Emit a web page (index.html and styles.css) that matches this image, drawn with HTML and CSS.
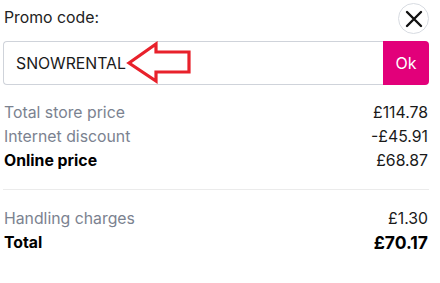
FILE: index.html
```html
<!DOCTYPE html>
<html>
<head>
<meta charset="utf-8">
<link rel="stylesheet" href="styles.css">
</head>
<body>
<div class="panel">
  <div class="head">
    <span class="label">Promo code:</span>
    <button class="close" aria-label="Close">
      <svg width="18" height="18" viewBox="0 0 18 18"><path d="M2 2L16 16M16 2L2 16" stroke="#111" stroke-width="2.4" stroke-linecap="round"/></svg>
    </button>
  </div>
  <div class="promo">
    <div class="input">
      <span class="code">SNOWRENTAL</span>
      <svg class="arrow" width="66" height="44" viewBox="0 0 66 44"><path d="M3 22L30 3V11H63V31H30V40Z" fill="none" stroke="#e8212b" stroke-width="3.2" stroke-linejoin="miter"/></svg>
    </div>
    <button class="ok">Ok</button>
  </div>
  <div class="rows first">
    <div class="row"><span class="muted">Total store price</span><span>£114.78</span></div>
    <div class="row"><span class="muted">Internet discount</span><span>-£45.91</span></div>
    <div class="row strong"><span>Online price</span><span class="plain">£68.87</span></div>
  </div>
  <hr class="sep">
  <div class="rows">
    <div class="row"><span class="muted">Handling charges</span><span>£1.30</span></div>
    <div class="row strong total"><span>Total</span><span class="big">£70.17</span></div>
  </div>
</div>
</body>
</html>
```
FILE: styles.css
```css
html, body { margin: 0; padding: 0; background: #fff; }
body { font-family: Inter, "Noto Sans", sans-serif; color: #1a1a1a; font-size: 15.8px; }
.panel { width: 426px; padding: 0 11px 0 3px; }
.head { display: flex; justify-content: space-between; align-items: center; height: 35px; }
.label { padding-left: 1px; color: #222; }
.close { width: 31px; height: 31px; border-radius: 50%; border: 1px solid #d8dce2; background: #fff; display: flex; align-items: center; justify-content: center; padding: 0; margin-right: 0; margin-top: 2px; }
.promo { display: flex; height: 44px; margin-top: 6px; }
.input { flex: 1; border: 1px solid #cfd3da; border-right: none; border-radius: 4px 0 0 4px; display: flex; align-items: center; padding-left: 12px; position: relative; }
.code { color: #1a1a1a; }
.arrow { position: absolute; left: 122px; top: -1px; }
.ok { width: 46px; border: none; background: #e2007a; color: #fff; font-family: inherit; font-size: 16px; border-radius: 0 4px 4px 0; padding: 0; }
.rows { display: flex; flex-direction: column; padding-top: 17px; }
.rows.first { padding-top: 16px; }
.row { display: flex; justify-content: space-between; height: 24px; line-height: 24px; padding-left: 1px; padding-right: 1px; }
.muted { color: #7b8290; }
.strong { font-weight: 700; color: #000; }
.plain { font-weight: 400; color: #1a1a1a; }
.sep { border: none; border-top: 1px solid #ebebeb; margin: 16px 0 0; }
.total .big { font-size: 17.5px; }
```
